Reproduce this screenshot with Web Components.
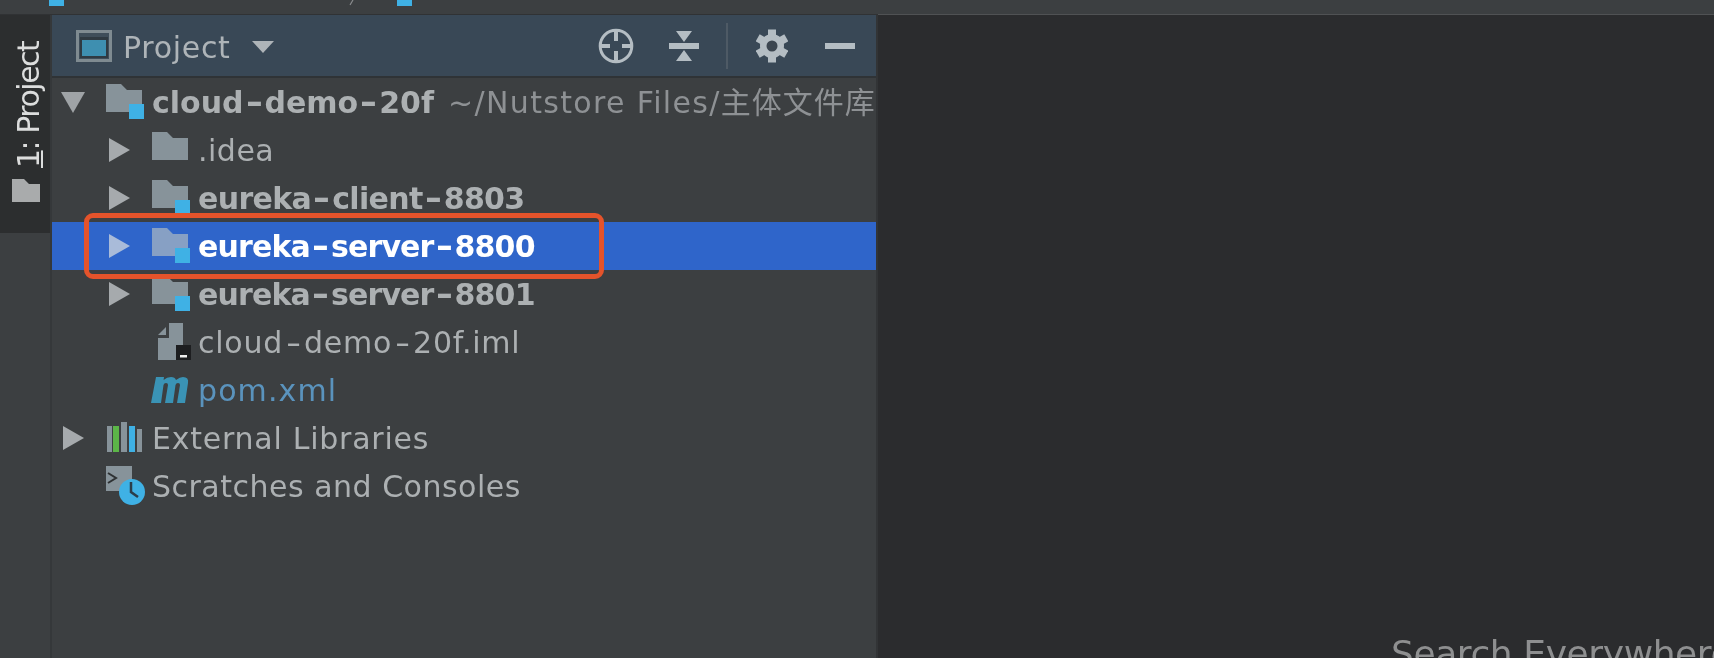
<!DOCTYPE html>
<html><head><meta charset="utf-8"><style>
html,body{margin:0;padding:0;background:#2b2c2e;overflow:hidden}
body{width:1714px;height:658px}
</style></head><body>
<ide-window></ide-window>
<script>
const F='"DejaVu Sans","Noto Sans CJK SC",sans-serif';
const folder=(c='#87939a',badge='')=>`<svg width="40" height="36" viewBox="0 0 40 36"><path d="M0 0H15L21 6H36V28H0Z" fill="${c}"/>${badge?`<rect x="23" y="20" width="15" height="15" fill="#3fb1e5"/>`:''}</svg>`;
const icons={
 folder:folder(),
 module:folder('#87939a',1),
 moduleSel:folder('#87a0c4',1),
 iml:`<svg width="40" height="40" viewBox="-4 0 40 40"><path d="M2 13L10 5V13Z M13 1H27V38H2V16H13Z" fill="#87939a"/><rect x="20" y="23" width="15" height="15" fill="#1d1e20"/><rect x="24" y="33" width="7" height="2.500" fill="#eee"/></svg>`,
 pom:`<svg width="40" height="28" viewBox="2 0 40 28" style="overflow:visible"><path d="M6 1H14L13.600 4Q17 1 21 1Q25 1 26 4Q30 1 33 1Q39 1 38 7L35 27H27L30 9Q30 7 28 7Q26 7 25.500 9L23 27H15L18 9Q18 7 16 7Q14 7 13.500 9L11 27H1Z" fill="#3a93b5"/></svg>`,
 libs:`<svg width="40" height="32" viewBox="0 1 40 32"><rect x="1" y="5" width="5" height="26" fill="#87939a"/><rect x="7" y="5" width="6" height="26" fill="#5cb648"/><rect x="15" y="0" width="6" height="31" fill="#87939a"/><rect x="23" y="5" width="6" height="26" fill="#3fb1e5"/><rect x="31" y="8" width="5" height="23" fill="#87939a"/></svg>`,
 scratch:`<svg width="40" height="40" viewBox="0 0 40 40"><rect x="0" y="0" width="26" height="25" fill="#87939a"/><path d="M2 7L10 12L2 17" fill="none" stroke="#2e3133" stroke-width="2"/><circle cx="26" cy="26" r="13" fill="#3fb1e5"/><path d="M25 16V26L32 31" fill="none" stroke="#2b3d4a" stroke-width="2.500"/></svg>`
};
class WideDash extends HTMLElement{
 constructor(){super();this.attachShadow({mode:'open'}).innerHTML=`<style>:host{display:inline-block;width:21px;text-align:center;letter-spacing:0;transform:scaleX(1.4)}</style><slot></slot>`;}
}
customElements.define('wide-dash',WideDash);
class TreeArrow extends HTMLElement{
 constructor(){super();const d=this.getAttribute('dir');this.attachShadow({mode:'open'}).innerHTML=`<style>:host{display:block;height:26px}svg{display:block}</style>`+
 (d==='down'?`<svg width="26" height="24" viewBox="0 0 26 24"><path d="M1 3H25L13 24Z" fill="#9fa3a6"/></svg>`:d==='right'?`<svg width="24" height="26" viewBox="0 0 24 26"><path d="M0 1L21 13L0 25Z" fill="${this.hasAttribute('sel')?'#a9bbd9':'#a6aaad'}"/></svg>`:'');}
}
customElements.define('tree-arrow',TreeArrow);
class TreeRow extends HTMLElement{
 constructor(){super();const s=this.attachShadow({mode:'open'});
  const lvl=+this.getAttribute('level')||0,ic=this.getAttribute('icon'),arrow=this.getAttribute('arrow')||'',sel=this.hasAttribute('selected');
  s.innerHTML=`<style>
  :host{display:flex;align-items:center;height:48px;box-sizing:border-box;padding-left:${lvl?57:(arrow==='right'?11:8)}px;white-space:nowrap;font:${this.hasAttribute('bold')?'bold':'normal'} 30px/48px ${F};letter-spacing:var(--ls,.5px);color:#acb0b2;${sel?'background:#2f65ca;color:#fff;':''}}
  :host([link]){color:#5a93bd}
  .i{width:46px;height:48px;display:flex;align-items:center;flex:none}
  .i svg{display:block}
  .t{margin-top:2px}
  tree-arrow{flex:none;width:${lvl||arrow==='right'?43:46}px}
  </style><tree-arrow dir="${arrow}" ${sel?'sel':''}></tree-arrow><div class="i">${icons[ic]}</div><div class="t"><slot></slot></div>`;
 }
}
customElements.define('tree-row',TreeRow);
class PathHint extends HTMLElement{
 constructor(){super();this.attachShadow({mode:'open'}).innerHTML=`<style>:host{display:inline;color:#8e9194;font-weight:normal;margin-left:14px;letter-spacing:1.35px}
 ::slotted(span){letter-spacing:1px}</style><slot></slot>`;}
}
customElements.define('path-hint',PathHint);
class ToolBar extends HTMLElement{
 constructor(){super();this.attachShadow({mode:'open'}).innerHTML=`<style>
 :host{display:flex;align-items:center;height:61px;flex:none;background:#394856;border-bottom:2px solid #2f3336;padding:0 21px 0 24px;color:#aeb4b8;font:30px ${F};letter-spacing:.7px}
 svg{display:block;flex:none}
 .t{margin:3px 0 0 11px}
 .c{margin:2px 0 0 21px}
 .sp{flex:1}
 </style>
 <svg width="36" height="32" viewBox="0 0 36 32"><rect x="1.500" y="1.500" width="33" height="29" fill="#3f4e5a" stroke="#7f8b91" stroke-width="3"/><rect x="4" y="7" width="28" height="21" fill="#2f3a42"/><rect x="6" y="10" width="24" height="16" fill="#3e8fb0"/></svg>
 <span class="t">Project</span>
 <svg class="c" width="22" height="12" viewBox="0 0 22 12"><path d="M0 0H22L11 12Z" fill="#aeb4b8"/></svg>
 <span class="sp"></span>
 <svg width="36" height="36" viewBox="0 0 36 36"><circle cx="18" cy="18" r="15.800" fill="none" stroke="#b4bdc3" stroke-width="3"/><path d="M18 3V13M18 23V33M3 18H12M24 18H33" stroke="#b4bdc3" stroke-width="4"/></svg>
 <svg style="margin-left:35px" width="30" height="32" viewBox="0 0 30 32"><path d="M7 1H23L15 12Z M7 31H23L15 20Z" fill="#b4bdc3"/><rect y="13" width="30" height="6" fill="#b4bdc3"/></svg>
 <svg style="margin-left:27px" width="2" height="46" viewBox="0 0 2 46"><rect width="2" height="46" fill="#4e5a65"/></svg>
 <svg style="margin-left:28px" width="32" height="34" viewBox="-16 -17 32 34"><g fill="#b4bdc3"><circle r="12"/><g><rect x="-4" y="-16.500" width="8" height="6"/><rect x="-4" y="10.500" width="8" height="6"/></g><g transform="rotate(60)"><rect x="-4" y="-16.500" width="8" height="6"/><rect x="-4" y="10.500" width="8" height="6"/></g><g transform="rotate(120)"><rect x="-4" y="-16.500" width="8" height="6"/><rect x="-4" y="10.500" width="8" height="6"/></g></g><circle r="5.500" fill="#3c4650"/></svg>
 <svg style="margin-left:37px" width="30" height="6" viewBox="0 0 30 6"><rect width="30" height="6" fill="#b4bdc3"/></svg>`;}
}
customElements.define('tool-bar',ToolBar);
class SideStrip extends HTMLElement{
 constructor(){super();this.attachShadow({mode:'open'}).innerHTML=`<style>
 :host{display:block;width:50px;flex:none;background:#3c3f41;border-right:2px solid #35383a}
 .tab{height:218px;background:#2c2e2f;box-sizing:border-box;padding-top:23px;display:flex;flex-direction:column;align-items:center}
 .v{writing-mode:vertical-rl;transform:rotate(180deg);font:30px/40px ${F};letter-spacing:-1.5px;color:#dcdddd;white-space:nowrap;margin-left:8px;height:130px}
 u{text-decoration:underline;text-underline-position:from-font;text-underline-offset:-3px;text-decoration-thickness:2px}
 svg{display:block;margin:11px 0 0 2px}
 </style><div class="tab"><div class="v"><u>1</u>: Project</div><svg width="28" height="23" viewBox="0 0 28 23"><path d="M0 0H12L17 5H28V23H0Z" fill="#a9abac"/></svg></div>`;}
}
customElements.define('side-strip',SideStrip);
class ProjectPanel extends HTMLElement{
 constructor(){super();this.attachShadow({mode:'open'}).innerHTML=`<style>
 :host{display:flex;flex-direction:column;width:824px;flex:none;background:#3c3f41;border-right:2px solid #323436;overflow:hidden}
 </style><tool-bar></tool-bar><slot></slot>`;}
}
customElements.define('project-panel',ProjectPanel);
class IdeWindow extends HTMLElement{
 constructor(){super();this.attachShadow({mode:'open'}).innerHTML=`<style>
 :host{display:flex;flex-direction:column;width:1714px;height:658px;position:relative;overflow:hidden;filter:blur(.5px)}
 .top{height:14px;background:#3c3f41;border-bottom:1px solid #303234;flex:none;display:flex}
 .top i{display:block;width:15px;height:6px;background:#3fb1e5}
 .top i:nth-child(1){margin-left:49px}
 .top i:nth-child(2){margin-left:333px}
 .top svg{position:absolute;left:347px;top:0}
 .main{flex:1;display:flex;min-height:0}
 .ed{flex:1;background:#2b2c2e;overflow:hidden;box-sizing:border-box;padding:617px 0 0 513px;color:#8e8f90;font:36px/44px ${F};white-space:nowrap;letter-spacing:-.4px}
 .edw{flex:1;display:flex;margin-top:-1px;border-top:1px solid #505254;min-width:0}
 .box{position:absolute;left:84px;top:213px;width:520px;height:66px;box-sizing:border-box;border:5px solid #e4532b;border-radius:9px}
 </style>
 <div class="top"><i></i><i></i><svg width="8" height="6" viewBox="0 0 8 6"><path d="M6 0L3 5" stroke="#8a8c8e" stroke-width="1.200"/></svg></div>
 <div class="main"><side-strip></side-strip><project-panel>
  <tree-row level="0" arrow="down" icon="module" bold style="--ls:0px">cloud<wide-dash>-</wide-dash>demo<wide-dash>-</wide-dash>20f<path-hint>~/Nutstore Files/<span>主体文件库</span></path-hint></tree-row>
  <tree-row level="1" arrow="right" icon="folder">.idea</tree-row>
  <tree-row level="1" arrow="right" icon="module" bold style="--ls:-.65px">eureka<wide-dash>-</wide-dash>client<wide-dash>-</wide-dash>8803</tree-row>
  <tree-row level="1" arrow="right" icon="moduleSel" bold selected style="--ls:-.85px">eureka<wide-dash>-</wide-dash>server<wide-dash>-</wide-dash>8800</tree-row>
  <tree-row level="1" arrow="right" icon="module" bold style="--ls:-.85px">eureka<wide-dash>-</wide-dash>server<wide-dash>-</wide-dash>8801</tree-row>
  <tree-row level="1" icon="iml" style="--ls:.75px">cloud<wide-dash>-</wide-dash>demo<wide-dash>-</wide-dash>20f.iml</tree-row>
  <tree-row level="1" icon="pom" link style="--ls:1.1px">pom.xml</tree-row>
  <tree-row level="0" arrow="right" icon="libs" style="--ls:.75px">External Libraries</tree-row>
  <tree-row level="0" icon="scratch">Scratches and Consoles</tree-row>
 </project-panel><div class="edw"><div class="ed">Search Everywhere</div></div></div>
 <div class="box"></div>`;}
}
customElements.define('ide-window',IdeWindow);
</script></body></html>
